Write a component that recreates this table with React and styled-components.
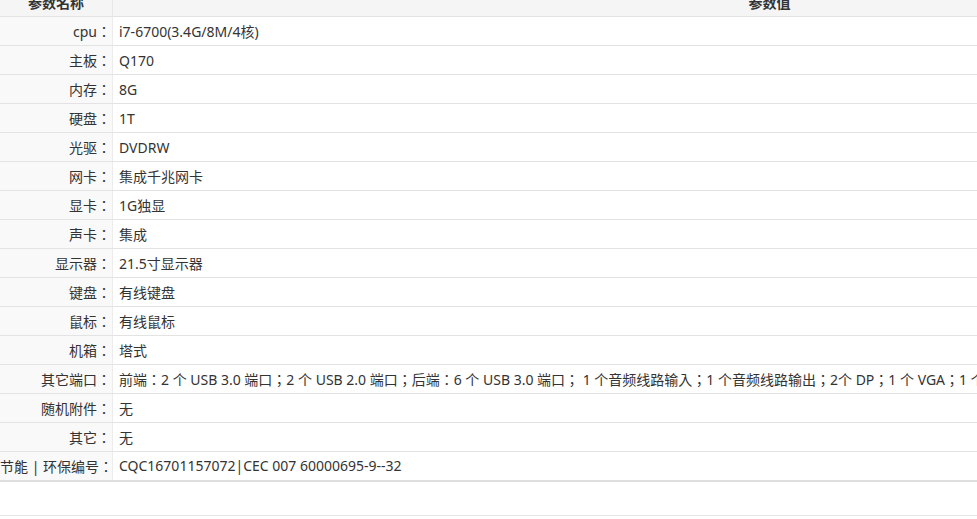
import React from 'react'
import styled, { createGlobalStyle } from 'styled-components';

const GlobalStyle = createGlobalStyle`
  html, body {
    margin: 0;
    padding: 0;
    overflow: hidden;
    background: #fff;
  }
  body {
    font-family: "Noto Sans", "Noto Sans CJK TC", sans-serif;
    color: #333;
  }
`;

const specs = [
  { name: "cpu", value: "i7-6700(3.4G/8M/4核)" },
  { name: "主板", value: "Q170" },
  { name: "内存", value: "8G" },
  { name: "硬盘", value: "1T" },
  { name: "光驱", value: "DVDRW" },
  { name: "网卡", value: "集成千兆网卡" },
  { name: "显卡", value: "1G独显" },
  { name: "声卡", value: "集成" },
  { name: "显示器", value: "21.5寸显示器" },
  { name: "键盘", value: "有线键盘" },
  { name: "鼠标", value: "有线鼠标" },
  { name: "机箱", value: "塔式" },
  { name: "其它端口", value: "前端：2 个 USB 3.0 端口；2 个 USB 2.0 端口；后端：6 个 USB 3.0 端口； 1 个音频线路输入；1 个音频线路输出；2个 DP；1 个 VGA；1 个 RJ45；1 个串口" },
  { name: "随机附件", value: "无" },
  { name: "其它", value: "无" },
  { name: "节能 | 环保编号", value: "CQC16701157072|CEC 007 60000695-9--32" },
];

const App = () => {
  return (
    <Page>
      <GlobalStyle />
      <SpecTable>
        <thead>
          <tr>
            <HeadCell>参数名称</HeadCell>
            <HeadCell>参数值</HeadCell>
          </tr>
        </thead>
        <tbody>
          {specs.map(item => (
            <tr key={item.name}>
              <LabelCell>{item.name}：</LabelCell>
              <ValueCell>{item.value}</ValueCell>
            </tr>
          ))}
        </tbody>
      </SpecTable>
      <Footer />
    </Page>
  )
}
export default App;

const Page = styled.div`
  width: 977px;
  height: 519px;
  overflow: hidden;
`;

const SpecTable = styled.table`
  width: 1427px;
  margin-top: -13px;
  border-collapse: collapse;
  table-layout: fixed;
  font-size: 14px;
  border-bottom: 2px solid #dedede;
  tr{
    height: 29px;
  }
`;

const HeadCell = styled.th`
  height: 29px;
  padding: 0;
  background: #f5f5f5;
  font-weight: bold;
  text-align: center;
  color: #333;
  border-bottom: 1px solid #e3e3e3;
  border-right: 1px solid #e8e8e8;
  &:first-child{
    width: 112px;
  }
`;

const LabelCell = styled.td`
  padding: 0 1px 0 0;
  background: #f9f9f9;
  text-align: right;
  white-space: nowrap;
  overflow: visible;
  border-bottom: 1px solid #e3e3e3;
  border-right: 1px solid #ececec;
`;

const ValueCell = styled.td`
  padding: 0 0 0 6px;
  white-space: nowrap;
  border-bottom: 1px solid #e3e3e3;
`;

const Footer = styled.div`
  margin-top: 33px;
  border-top: 1px solid #e5e5e5;
`;
